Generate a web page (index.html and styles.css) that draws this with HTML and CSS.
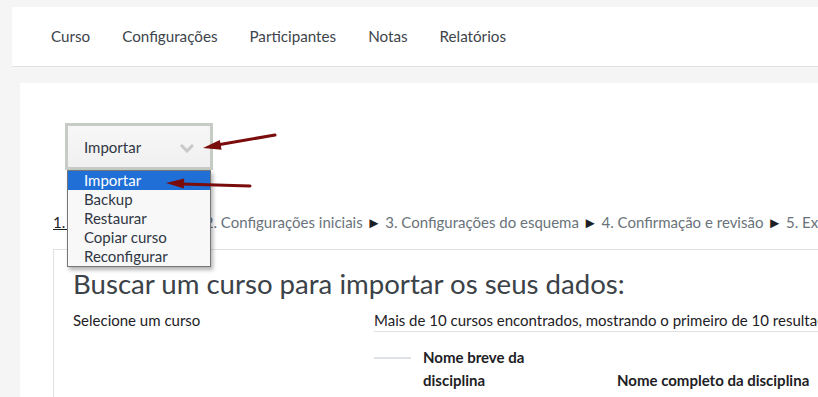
FILE: index.html
```html
<!DOCTYPE html>
<html>
<head>
	<meta charset="utf-8">
	<link rel="stylesheet" href="styles.css">
</head>
<body>
	<nav class="topnav">
		<a class="nav-item">Curso</a>
		<a class="nav-item">Configurações</a>
		<a class="nav-item">Participantes</a>
		<a class="nav-item">Notas</a>
		<a class="nav-item">Relatórios</a>
	</nav>

	<div class="main">
		<div class="select-wrap">
			<div class="select">
				<span>Importar</span>
				<svg class="chevron" width="16" height="10" viewBox="0 0 16 10">
					<polyline points="2,2 8,8 14,2" fill="none" stroke="#c9c9c9" stroke-width="3"/>
				</svg>
			</div>
			<ul class="options">
				<li class="selected">Importar</li>
				<li>Backup</li>
				<li>Restaurar</li>
				<li>Copiar curso</li>
				<li>Reconfigurar</li>
			</ul>
		</div>

		<div class="steps">
			<span class="current">1. Seleção do curso</span> <span class="sep">►</span> 2. Configurações iniciais <span class="sep">►</span> 3. Configurações do esquema <span class="sep">►</span> 4. Confirmação e revisão <span class="sep">►</span> 5. Execução da importação <span class="sep">►</span> 6. Concluído
		</div>

		<div class="card">
			<h2>Buscar um curso para importar os seus dados:</h2>
			<div class="search-row">
				<div class="label">Selecione um curso</div>
				<div class="results">
					<div class="count">Mais de 10 cursos encontrados, mostrando o primeiro de 10 resultados</div>
					<div class="thead">
						<div class="th-empty"><span></span></div>
						<div class="th short">Nome breve da disciplina</div>
						<div class="th">Nome completo da disciplina</div>
					</div>
				</div>
			</div>
		</div>
	</div>

	<svg class="arrows" width="818" height="397" viewBox="0 0 818 397">
		<line x1="275" y1="135" x2="217" y2="145" stroke="#7a0c0c" stroke-width="3" stroke-linecap="round"/>
		<polygon points="203,148 221.6,149.7 219.8,139.9" fill="#7a0c0c"/>
		<line x1="250" y1="186" x2="182" y2="184" stroke="#7a0c0c" stroke-width="3" stroke-linecap="round"/>
		<polygon points="166,183 184.2,178.6 183.8,188.6" fill="#7a0c0c"/>
	</svg>
</body>
</html>
```

FILE: styles.css
```css
html, body {
	margin: 0;
	overflow: hidden;
}

body {
	background: #f5f5f5;
	font-family: Lato, "Open Sans", sans-serif;
	font-size: 15px;
	color: #1d2125;
	position: relative;
	height: 397px;
}

/* top navigation */
.topnav {
	margin: 7px 0 0 12px;
	height: 59px;
	background: #fff;
	border-bottom: 1px solid #dee2e6;
	display: flex;
	align-items: center;
	gap: 32px;
	padding-left: 39px;
}

.nav-item {
	color: #3d444b;
	text-decoration: none;
	font-size: 15.2px;
	line-height: 22px;
	padding-bottom: 1px;
}

/* main region */
.main {
	margin: 16px 0 0 20px;
	background: #fff;
	height: 400px;
	padding: 40px 0 0 33px;
	white-space: nowrap;
	overflow: hidden;
}

.select-wrap {
	position: relative;
	margin-left: 12px;
	width: 148px;
}

.select {
	box-sizing: border-box;
	height: 47px;
	border: 3px solid #c6ccc5;
	background: linear-gradient(#f7f7f7, #f0f0f0);
	display: flex;
	align-items: center;
	justify-content: space-between;
	padding: 0 15px 0 16px;
	color: #2f3644;
}

.chevron {
	margin-top: 2px;
}

.options {
	position: absolute;
	top: 47px;
	left: 2px;
	width: 144px;
	box-sizing: border-box;
	margin: 0;
	padding: 0;
	list-style: none;
	background: #f8f8f8;
	border: 1px solid #767676;
	box-shadow: 2px 3px 4px rgba(0, 0, 0, 0.3);
	z-index: 2;
}

.options li {
	height: 19px;
	line-height: 19px;
	padding-left: 16px;
	color: #2f3644;
}

.options li.selected {
	background: #1f6fd6;
	color: #fff;
}

/* step breadcrumb */
.steps {
	margin-top: 41px;
	line-height: 22px;
	color: #6a737b;
}

.steps .current {
	color: #1d2125;
	text-decoration: underline;
	margin-right: 2px;
}

.steps .sep {
	color: #1d2125;
}

/* search card */
.card {
	margin-top: 16px;
	border: 1px solid #dee2e6;
	border-right: none;
	padding: 17px 0 0 19px;
	height: 200px;
}

.card h2 {
	margin: 0;
	font-size: 27.6px;
	font-weight: 400;
	line-height: 1.2;
	color: #3b4248;
}

.search-row {
	display: flex;
	margin-top: 9px;
}

.label {
	width: 301px;
	flex-shrink: 0;
	line-height: 22px;
}

.results {
	flex: 1;
}

.count {
	line-height: 22px;
	border-bottom: 1px solid #dee2e6;
}

.thead {
	display: grid;
	grid-template-columns: 37px 182px auto;
	column-gap: 12px;
	align-items: end;
	margin-top: 14px;
	font-weight: 700;
	line-height: 23px;
}

.th-empty {
	align-self: start;
	padding-top: 11px;
}

.th-empty span {
	display: block;
	height: 2px;
	background: #dee2e6;
}

.th.short {
	white-space: normal;
	width: 115px;
}

.arrows {
	position: absolute;
	top: 0;
	left: 0;
	pointer-events: none;
	z-index: 3;
}
```
